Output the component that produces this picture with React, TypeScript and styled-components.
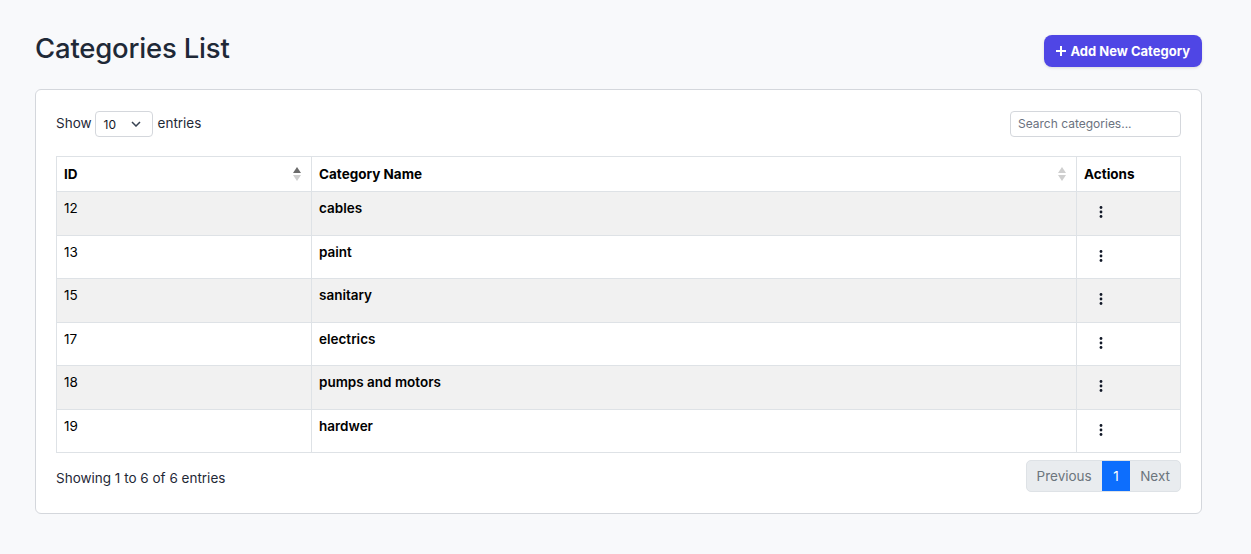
import styled, { createGlobalStyle } from "styled-components";

const GlobalStyle = createGlobalStyle`
  * { box-sizing: border-box; }
  body {
    margin: 0;
    background: #f8f9fb;
    font-family: Inter, "Noto Sans", Arial, sans-serif;
    color: #111827;
  }
`;

const Page = styled.div`
  padding: 31px 49px 39px 35px;
`;

const Header = styled.div`
  display: flex;
  justify-content: space-between;
  align-items: flex-start;
  height: 36px;
  margin-bottom: 22px;
`;

const Title = styled.h1`
  margin: 0;
  font-size: 27.5px;
  line-height: 34px;
  font-weight: 500;
  color: #1f2937;
  letter-spacing: -0.2px;
`;

const AddButton = styled.button`
  display: flex;
  align-items: center;
  gap: 3px;
  height: 32px;
  padding: 0 12px 0 11px;
  margin-top: 4px;
  border: none;
  border-radius: 8px;
  background: #4f46e5;
  color: #fff;
  font-family: inherit;
  font-size: 13px;
  font-weight: 700;
  box-shadow: 0 1px 3px rgba(0, 0, 0, 0.12);
`;

const Card = styled.div`
  background: #fff;
  border: 1px solid #d4d7dc;
  border-radius: 6px;
  padding: 21px 20px 21px 20px;
`;

const TopBar = styled.div`
  display: flex;
  justify-content: space-between;
  align-items: center;
  height: 26px;
  margin-bottom: 19px;
  font-size: 13.5px;
  color: #1f2937;
`;

const Length = styled.label`
  display: flex;
  align-items: center;
  gap: 4px;
  margin-top: -3px;
`;

const SelectBox = styled.div`
  display: flex;
  align-items: center;
  justify-content: space-between;
  width: 58px;
  height: 26px;
  margin: 3px 1px 0 -1px;
  padding: 0 11px 0 8px;
  border: 1px solid #d4d7dc;
  border-radius: 4px;
  font-size: 12px;
  color: #111827;
`;

const Search = styled.input`
  width: 171px;
  height: 26px;
  padding: 0 7px 2px;
  border: 1px solid #d4d7dc;
  border-radius: 4px;
  font-family: inherit;
  font-size: 12px;
  color: #111827;
  &::placeholder { color: #6b7280; }
`;

const Table = styled.table`
  width: 100%;
  border-collapse: collapse;
  font-size: 13.5px;
`;

const Th = styled.th<{ w?: number }>`
  position: relative;
  height: 35px;
  padding: 0 7px;
  text-align: left;
  font-weight: 700;
  color: #000;
  border: 1px solid #dee2e6;
  ${(p) => (p.w ? `width: ${p.w}px;` : "")}
`;

const Row = styled.tr<{ striped: boolean }>`
  background: ${(p) => (p.striped ? "#f1f1f1" : "#fff")};
`;

const Td = styled.td<{ bold?: boolean }>`
  height: 43.5px;
  padding: 8px 7px 0;
  vertical-align: top;
  border: 1px solid #dee2e6;
  color: #000;
  font-weight: ${(p) => (p.bold ? 600 : 400)};
`;

const ActionCell = styled.td`
  height: 43.5px;
  padding: 0 0 0 22px;
  vertical-align: middle;
  border: 1px solid #dee2e6;
`;

const Kebab = styled.button`
  display: flex;
  border: none;
  background: none;
  padding: 0;
  margin-top: -2px;
`;

const SortIcon = styled.span`
  position: absolute;
  right: 10px;
  top: 50%;
  transform: translateY(-50%);
  display: flex;
`;

const Footer = styled.div`
  display: flex;
  justify-content: space-between;
  align-items: center;
  margin-top: 7px;
  font-size: 13.5px;
  color: #1f2937;
`;

const Info = styled.div`
  margin-top: 4px;
`;

const Pager = styled.div`
  display: flex;
  height: 32px;
  border: 1px solid #dee2e6;
  border-radius: 5px;
  overflow: hidden;
  background: #e9ecef;
`;

const PageBtn = styled.span<{ active?: boolean }>`
  display: flex;
  align-items: center;
  padding: 0 ${(p) => (p.active ? 11.5 : 10)}px;
  font-size: 13.5px;
  color: ${(p) => (p.active ? "#fff" : "#6c757d")};
  background: ${(p) => (p.active ? "#0d6efd" : "transparent")};
`;

const Sort = ({ up }: { up: boolean }) => (
  <SortIcon>
    <svg width="8" height="16" viewBox="0 0 8 16">
      <path d="M4 1 L8 7 L0 7 Z" fill={up ? "#6b6b6b" : "#cfcfcf"} />
      <path d="M4 15 L8 9 L0 9 Z" fill="#cfcfcf" />
    </svg>
  </SortIcon>
);

const Dots = () => (
  <svg width="4" height="14" viewBox="0 0 4 14">
    <circle cx="2" cy="2.5" r="1.4" fill="#111827" />
    <circle cx="2" cy="7" r="1.4" fill="#111827" />
    <circle cx="2" cy="11.5" r="1.4" fill="#111827" />
  </svg>
);

const categories = [
  { id: 12, name: "cables" },
  { id: 13, name: "paint" },
  { id: 15, name: "sanitary" },
  { id: 17, name: "electrics" },
  { id: 18, name: "pumps and motors" },
  { id: 19, name: "hardwer" },
];

export default function App() {
  return (
    <>
      <GlobalStyle />
      <Page>
        <Header>
          <Title>Categories List</Title>
          <AddButton>
            <svg width="12" height="12" viewBox="0 0 12 12">
              <path d="M6 1v10M1 6h10" stroke="#fff" strokeWidth="2" />
            </svg>
            Add New Category
          </AddButton>
        </Header>
        <Card>
          <TopBar>
            <Length>
              Show
              <SelectBox>
                10
                <svg width="10" height="6" viewBox="0 0 10 6">
                  <path d="M1 1l4 4 4-4" fill="none" stroke="#374151" strokeWidth="1.5" />
                </svg>
              </SelectBox>
              entries
            </Length>
            <Search placeholder="Search categories..." />
          </TopBar>
          <Table>
            <thead>
              <tr>
                <Th w={255}>
                  ID
                  <Sort up />
                </Th>
                <Th>
                  Category Name
                  <Sort up={false} />
                </Th>
                <Th w={104}>Actions</Th>
              </tr>
            </thead>
            <tbody>
              {categories.map((c, i) => (
                <Row key={c.id} striped={i % 2 === 0}>
                  <Td>{c.id}</Td>
                  <Td bold>{c.name}</Td>
                  <ActionCell>
                    <Kebab>
                      <Dots />
                    </Kebab>
                  </ActionCell>
                </Row>
              ))}
            </tbody>
          </Table>
          <Footer>
            <Info>Showing 1 to 6 of 6 entries</Info>
            <Pager>
              <PageBtn>Previous</PageBtn>
              <PageBtn active>1</PageBtn>
              <PageBtn>Next</PageBtn>
            </Pager>
          </Footer>
        </Card>
      </Page>
    </>
  );
}
